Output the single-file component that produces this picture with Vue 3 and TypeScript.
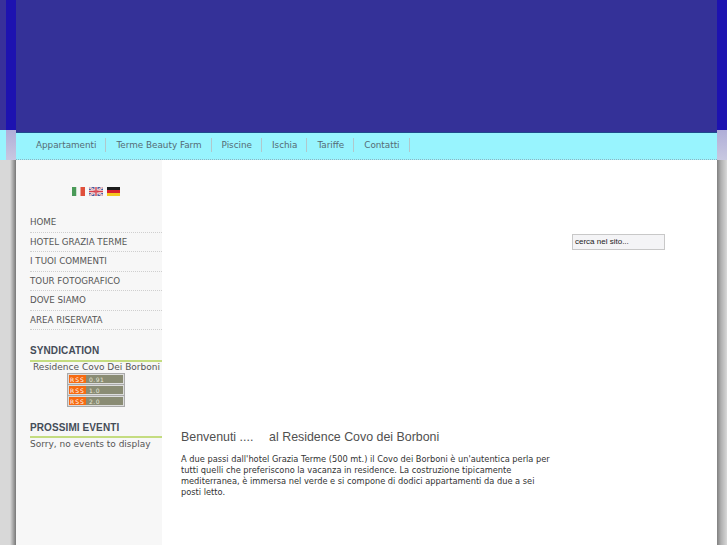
<script setup lang="ts">
const topLinks: string[] = ['Appartamenti', 'Terme Beauty Farm', 'Piscine', 'Ischia', 'Tariffe', 'Contatti']
const menu: string[] = ['HOME', 'HOTEL GRAZIA TERME', 'I TUOI COMMENTI', 'TOUR FOTOGRAFICO', 'DOVE SIAMO', 'AREA RISERVATA']
const feeds: string[] = ['0.91', '1.0', '2.0']
</script>

<template>
  <div class="page">
    <div class="gutter">
      <div class="g-top"><i class="g-blue"></i></div>
      <div class="g-mid"><i class="g-lav"></i></div>
      <div class="g-low g-low-left"></div>
    </div>
    <div class="center">
      <header class="banner"></header>
      <nav class="topnav">
        <a v-for="l in topLinks" :key="l" class="toplink">{{ l }}</a>
      </nav>
      <div class="content">
        <aside class="sidebar">
          <div class="flags">
            <svg width="13" height="9" viewBox="0 0 13 9"><rect width="4.5" height="9" fill="#4a9a58"/><rect x="4.5" width="4" height="9" fill="#f6f6f6"/><rect x="8.5" width="4.5" height="9" fill="#e0503c"/></svg>
            <svg width="14" height="9" viewBox="0 0 14 9"><rect width="14" height="9" fill="#4a5a9c"/><path d="M0 0L14 9M14 0L0 9" stroke="#eee" stroke-width="2"/><path d="M7 0V9M0 4.5H14" stroke="#eee" stroke-width="3"/><path d="M7 0V9M0 4.5H14" stroke="#d8404c" stroke-width="1.4"/><path d="M0 0L14 9M14 0L0 9" stroke="#d8606c" stroke-width=".6"/></svg>
            <svg width="13" height="9" viewBox="0 0 13 9"><rect width="13" height="3" fill="#1c1c1c"/><rect y="3" width="13" height="3" fill="#d8202c"/><rect y="6" width="13" height="3" fill="#f4c820"/></svg>
          </div>
          <ul class="menu">
            <li v-for="m in menu" :key="m">{{ m }}</li>
          </ul>
          <h3 class="side-title first">SYNDICATION</h3>
          <p class="syn-name">Residence Covo Dei Borboni</p>
          <div class="rss-box">
            <div v-for="f in feeds" :key="f" class="rss"><b>RSS</b><span>{{ f }}</span></div>
          </div>
          <h3 class="side-title second">PROSSIMI EVENTI</h3>
          <p class="events">Sorry, no events to display</p>
        </aside>
        <main class="main">
          <div class="search-row"><div class="search">cerca nel sito...</div></div>
          <h1 class="welcome">Benvenuti ....&nbsp;&nbsp;&nbsp; <span class="welcome-tail">al Residence Covo dei Borboni</span></h1>
          <p class="intro">A due passi dall'hotel Grazia Terme (500 mt.) il Covo dei Borboni è un'autentica perla per tutti quelli che preferiscono la vacanza in residence. La costruzione tipicamente mediterranea, è immersa nel verde e si compone di dodici appartamenti da due a sei posti letto.</p>
        </main>
      </div>
    </div>
    <div class="gutter">
      <div class="g-top g-top-right"></div>
      <div class="g-mid g-mid-right"></div>
      <div class="g-low g-low-right"></div>
    </div>
  </div>
</template>

<style>
html, body { margin: 0; background: #d8d8d8; overflow: hidden; }
</style>

<style scoped>
.page {
  display: grid;
  grid-template-columns: 16px 701px 10px;
  height: 545px;
  overflow: hidden;
  font-family: "DejaVu Sans", sans-serif;
}
.gutter { display: flex; flex-direction: column; height: 545px; }
.g-top { height: 130px; background: #38309a; display: flex; justify-content: flex-end; }
.g-blue { width: 10px; background: #1d12b0; }
.g-mid { height: 30px; background: #98f4fe; display: flex; justify-content: flex-end; }
.g-lav { width: 10px; background: linear-gradient(#b0aed8, #c8c8e0); }
.g-low { flex: 1; background: #d8d8d8; }
.g-low-left { background: linear-gradient(90deg, #d8d8d8 0, #d8d8d8 10px, #a8a8a8 13px, #777 16px); }
.g-low-right { background: linear-gradient(90deg, #808080 0, #b0b0b0 4px, #d8d8d8 10px); }
.g-top-right { background: #1d12b0; }
.g-mid-right { background: linear-gradient(#b0aed8, #c8c8e0); }
.banner { height: 133px; background: #343198; border-bottom: 1px solid #1e4a8c; box-sizing: border-box; }
.topnav {
  height: 27px;
  box-sizing: border-box;
  background: #98f4fe;
  display: flex;
  align-items: center;
  padding: 0 0 2px 10px;
  border-bottom: 1px dotted #8fb4c0;
}
.toplink {
  font-size: 8.8px;
  color: #556b75;
  padding: 0 9px 0 10px;
  line-height: 14px;
  border-right: 1px solid #b0c8cc;
}
.content { display: flex; height: 385px; background: #fff; }
.sidebar { width: 146px; background: #f7f7f7; box-sizing: border-box; padding: 27px 0 0 14px; }
.flags { display: flex; gap: 4px; justify-content: center; height: 9px; margin-bottom: 17px; }
.menu { list-style: none; margin: 0; padding: 0; }
.menu li {
  font-size: 8.7px;
  color: #555;
  height: 19.5px;
  line-height: 19px;
  border-bottom: 1px dotted #cfcfcf;
  box-sizing: border-box;
  white-space: nowrap;
}
.side-title {
  margin: 0;
  font: bold 10px/14px "Liberation Sans", sans-serif;
  letter-spacing: 0.1px;
  color: #444c58;
  border-bottom: 2px solid #c4dc80;
  box-sizing: border-box;
}
.first { margin-top: 14px; height: 18px; }
.syn-name { margin: 0 0 1px; font-size: 9px; line-height: 10px; color: #555; padding-left: 3px; white-space: nowrap; }
.rss-box { width: 58px; margin: 0 0 0 37px; background: #aaa; padding: 1px; box-sizing: border-box; display: flex; flex-direction: column; gap: 1px; }
.rss { display: flex; height: 10px; font-size: 6px; line-height: 9px; border: 1px solid #ddd; box-sizing: border-box; background: #8a8c74; color: #e8e8d8; }
.rss b { width: 17px; background: #f66a12; color: #fff; font-weight: normal; text-align: center; letter-spacing: 1px; }
.rss span { padding-left: 3px; letter-spacing: .5px; }
.second { margin-top: 14px; height: 17px; }
.events { margin: 0; font-size: 9px; line-height: 12px; color: #555; white-space: nowrap; }
.main { flex: 1; position: relative; padding: 0 0 0 19px; }
.search-row { height: 270px; display: flex; justify-content: flex-end; padding: 74px 52px 0 0; box-sizing: border-box; }
.search {
  width: 93px; height: 16px; box-sizing: border-box;
  background: #f4f4f6; border: 1px solid #c8c8c8;
  font: 8px/14px "Liberation Sans", sans-serif; color: #222; padding-left: 2px;
}
.welcome { margin: 0; font: normal 12.4px/14px "Liberation Sans", sans-serif; color: #505050; width: 520px; }
.welcome-tail { margin-left: 2px; }
.intro { margin: 10px 0 0; width: 372px; font-size: 8.25px; line-height: 11px; color: #333; }
</style>
